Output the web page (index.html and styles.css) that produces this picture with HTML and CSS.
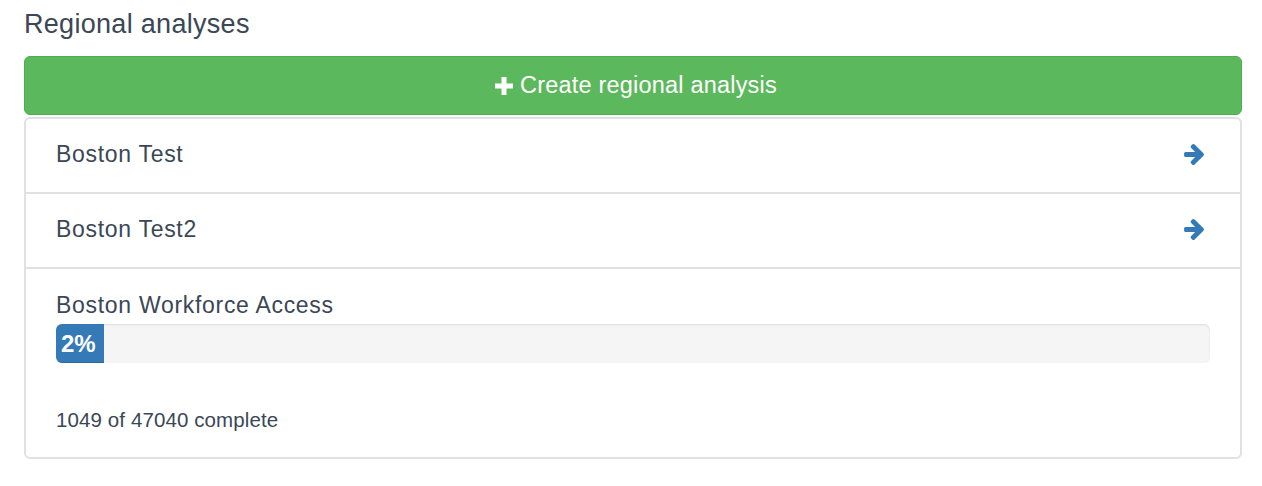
FILE: index.html
```html
<!DOCTYPE html>
<html>
<head>
<meta charset="utf-8">
<link rel="stylesheet" href="styles.css">
</head>
<body>
<div class="page">
  <h2 class="title">Regional analyses</h2>
  <button class="btn-create">
    <svg class="plus" width="18" height="18" viewBox="0 0 18 18"><rect x="6.5" y="0" width="5" height="18" fill="#fff"/><rect x="0" y="6.5" width="18" height="5" fill="#fff"/></svg>
    <span>Create regional analysis</span>
  </button>
  <div class="list">
    <div class="row">
      <span class="name">Boston Test</span>
      <svg class="arrow" width="20" height="21" viewBox="0 53 1472 1558"><path fill="currentColor" d="M1472 832q0 54-37 91l-651 651q-39 37-91 37-51 0-90-37l-75-75q-38-38-38-91t38-91l293-293h-704q-52 0-84.5-37.5t-32.5-90.5v-128q0-53 32.5-90.5t84.5-37.5h704l-293-294q-38-36-38-90t38-90l75-75q38-38 90-38 53 0 91 38l651 651q37 35 37 90z"/></svg>
    </div>
    <div class="row">
      <span class="name">Boston Test2</span>
      <svg class="arrow" width="20" height="21" viewBox="0 53 1472 1558"><path fill="currentColor" d="M1472 832q0 54-37 91l-651 651q-39 37-91 37-51 0-90-37l-75-75q-38-38-38-91t38-91l293-293h-704q-52 0-84.5-37.5t-32.5-90.5v-128q0-53 32.5-90.5t84.5-37.5h704l-293-294q-38-36-38-90t38-90l75-75q38-38 90-38 53 0 91 38l651 651q37 35 37 90z"/></svg>
    </div>
    <div class="row-progress">
      <div class="name">Boston Workforce Access</div>
      <div class="progress"><div class="bar">2%</div></div>
      <div class="status">1049 of 47040 complete</div>
    </div>
  </div>
</div>
</body>
</html>
```
FILE: styles.css
```css
* { box-sizing: border-box; }
body {
  margin: 0;
  background: #fff;
  font-family: "Liberation Sans", Arial, sans-serif;
  color: #3b4756;
}
.page {
  padding: 9px 20px 0 24px;
}
.title {
  margin: 0 0 17px 0;
  font-size: 27px;
  line-height: 30px;
  font-weight: normal;
  letter-spacing: 0.3px;
}
.btn-create {
  display: flex;
  align-items: center;
  justify-content: center;
  gap: 7px;
  width: 100%;
  height: 59px;
  margin: 0;
  padding: 0 0 0 6px;
  background: #5cb85c;
  border: 1px solid #4cae4c;
  border-radius: 6px;
  color: #fff;
  font-family: "Liberation Sans", Arial, sans-serif;
  font-size: 23.5px;
  line-height: 1;
  letter-spacing: 0.2px;
}
.plus { display: block; }
.list {
  margin-top: 2px;
  border: 2px solid #e1e1e1;
  border-radius: 6px;
}
.row {
  display: flex;
  align-items: center;
  justify-content: space-between;
  height: 75px;
  padding: 0 36px 2px 30px;
  border-bottom: 2px solid #e1e1e1;
  font-size: 23px;
  letter-spacing: 0.7px;
}
.arrow {
  display: block;
  color: #337ab7;
}
.row-progress {
  padding: 23px 30px 25px 30px;
}
.row-progress .name {
  font-size: 23px;
  line-height: 26px;
  letter-spacing: 0.7px;
}
.progress {
  margin-top: 6px;
  height: 39px;
  background: #f5f5f5;
  border-radius: 6px;
  box-shadow: inset 0 1px 2px rgba(0,0,0,0.1);
  overflow: hidden;
}
.bar {
  width: 48px;
  height: 100%;
  background: #337ab7;
  color: #fff;
  font-weight: bold;
  font-size: 24px;
  line-height: 39px;
  padding-left: 5px;
  box-shadow: inset 0 -1px 0 rgba(0,0,0,0.15);
}
.status {
  margin-top: 45px;
  font-size: 20.5px;
  line-height: 24px;
  letter-spacing: 0.1px;
}
```
